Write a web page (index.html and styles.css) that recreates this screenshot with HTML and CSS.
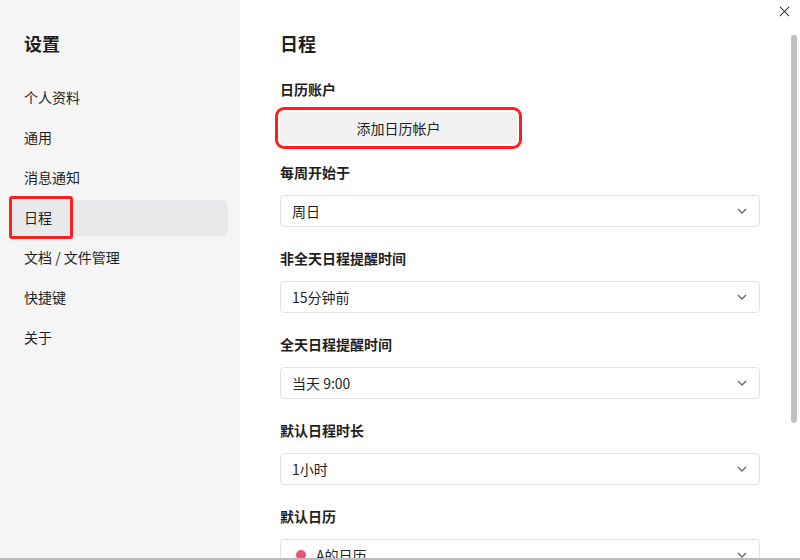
FILE: index.html
```html
<!DOCTYPE html>
<html lang="zh-CN">
<head>
    <meta charset="utf-8" />
    <title>设置</title>
    <link rel="stylesheet" href="styles.css">
</head>
<body>
    <div class="window">
        <aside class="sidebar">
            <h2 class="sidebarTitle">设置</h2>
            <nav class="navList">
                <div class="navItem">个人资料</div>
                <div class="navItem">通用</div>
                <div class="navItem">消息通知</div>
                <div class="navItem active">日程<span class="mark markNav"></span></div>
                <div class="navItem">文档 / 文件管理</div>
                <div class="navItem">快捷键</div>
                <div class="navItem">关于</div>
            </nav>
        </aside>

        <main class="content">
            <h1 class="pageTitle">日程</h1>

            <div class="field">
                <div class="fieldLabel">日历账户</div>
                <button class="addButton">添加日历帐户</button>
            </div>

            <div class="field">
                <div class="fieldLabel">每周开始于</div>
                <div class="select"><span>周日</span><svg class="chevron" viewBox="0 0 10 6"><polyline points="1,1 5,5 9,1" /></svg></div>
            </div>

            <div class="field">
                <div class="fieldLabel">非全天日程提醒时间</div>
                <div class="select"><span>15分钟前</span><svg class="chevron" viewBox="0 0 10 6"><polyline points="1,1 5,5 9,1" /></svg></div>
            </div>

            <div class="field">
                <div class="fieldLabel">全天日程提醒时间</div>
                <div class="select"><span>当天 9:00</span><svg class="chevron" viewBox="0 0 10 6"><polyline points="1,1 5,5 9,1" /></svg></div>
            </div>

            <div class="field">
                <div class="fieldLabel">默认日程时长</div>
                <div class="select"><span>1小时</span><svg class="chevron" viewBox="0 0 10 6"><polyline points="1,1 5,5 9,1" /></svg></div>
            </div>

            <div class="field">
                <div class="fieldLabel">默认日历</div>
                <div class="select"><span class="calName"><i class="dot"></i>A的日历</span><svg class="chevron" viewBox="0 0 10 6"><polyline points="1,1 5,5 9,1" /></svg></div>
            </div>

            <svg class="closeIcon" viewBox="0 0 12 12"><path d="M1 1 L11 11 M11 1 L1 11" /></svg>
            <div class="scrollThumb"></div>
        </main>
    </div>
</body>
</html>
```

FILE: styles.css
```css
body {
    margin: 0;
    padding: 0;
    background-color: #ffffff;
    font-family: "Noto Sans CJK SC", "Noto Sans", sans-serif;
    color: #1f1f1f;
    font-size: 14px;
    overflow: hidden;
}

.window {
    display: flex;
    width: 800px;
    height: 558px;
    border-bottom: 2px solid #bcbcbc;
    overflow: hidden;
}

.sidebar {
    width: 240px;
    flex-shrink: 0;
    background-color: #f5f5f5;
    padding: 31px 12px 0 10px;
    box-sizing: border-box;
}

.sidebarTitle {
    margin: 0 0 25px 14px;
    font-size: 18px;
    line-height: 24px;
    font-weight: 700;
}

.navList {
    display: flex;
    flex-direction: column;
    gap: 4px;
}

.navItem {
    position: relative;
    height: 36px;
    line-height: 34px;
    padding-left: 14px;
    border-radius: 6px;
    box-sizing: border-box;
    color: #1f1f1f;
}

.navItem.active {
    background-color: #e9e9eb;
}

/* red annotation boxes */
.mark {
    position: absolute;
    border: 3px solid #ff1f1f;
    border-radius: 3px;
    box-sizing: border-box;
}

.markNav {
    left: -1px;
    top: -4px;
    width: 64px;
    height: 43px;
}

.content {
    position: relative;
    flex: 1;
    padding: 31px 40px 0 40px;
    box-sizing: border-box;
}

.pageTitle {
    margin: 0 0 24px 0;
    font-size: 18px;
    line-height: 24px;
    font-weight: 700;
}

.field {
    margin-bottom: 21px;
}

.field:first-of-type {
    margin-bottom: 18px;
}

.fieldLabel {
    font-size: 14px;
    line-height: 20px;
    font-weight: 600;
    margin-bottom: 13px;
}

.field:first-of-type .fieldLabel {
    margin-bottom: 13px;
}

.addButton {
    display: block;
    width: 237px;
    height: 32px;
    border: none;
    border-radius: 4px;
    background-color: #f1f1f1;
    font-family: inherit;
    font-size: 14px;
    color: #1f1f1f;
    outline: 3px solid #ff1f1f;
    outline-offset: 2px;
    padding: 0;
}

.select {
    display: flex;
    align-items: center;
    justify-content: space-between;
    height: 32px;
    border: 1px solid #e3e3e3;
    border-radius: 4px;
    padding: 0 12px 0 11px;
    box-sizing: border-box;
}

.calName {
    display: flex;
    align-items: center;
}

.dot {
    width: 10px;
    height: 10px;
    border-radius: 50%;
    background-color: #ef5472;
    margin: 0 10px 0 4px;
}

.chevron {
    width: 10px;
    height: 6px;
    fill: none;
    stroke: #666;
    stroke-width: 1.3;
}

.closeIcon {
    position: absolute;
    right: 10px;
    top: 6px;
    width: 11px;
    height: 11px;
    fill: none;
    stroke: #333;
    stroke-width: 1.1;
}

.scrollThumb {
    position: absolute;
    right: 3px;
    top: 35px;
    width: 6px;
    height: 388px;
    border-radius: 3px;
    background-color: #c1c1c5;
}
```
